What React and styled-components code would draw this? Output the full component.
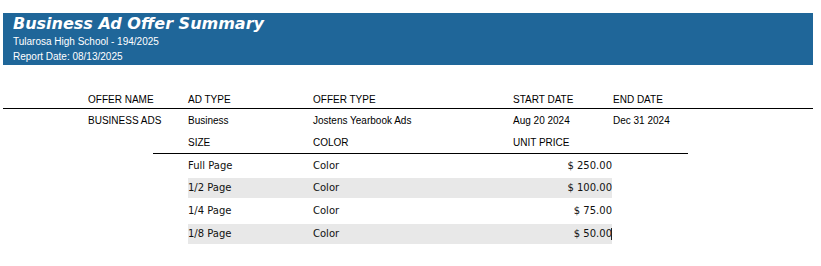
import React from "react";
import styled, { createGlobalStyle } from "styled-components";

const Global = createGlobalStyle`
  html, body { margin: 0; padding: 0; background: #fff; }
  body { font-family: "Liberation Sans", Arial, sans-serif; color: #000; }
`;

const Page = styled.div`
  padding: 13px 8px 0 3px;
  width: 810px;
`;

const Banner = styled.header`
  background: #1f6699;
  color: #fff;
  height: 52px;
  padding: 1px 0 0 10px;
  box-sizing: border-box;
  display: flex;
  flex-direction: column;
`;

const Title = styled.h1`
  margin: 0;
  font-family: "DejaVu Sans", sans-serif;
  font-weight: bold;
  font-style: italic;
  font-size: 16px;
  line-height: 20px;
`;

const SubLine = styled.div`
  font-family: "Liberation Sans", Arial, sans-serif;
  font-size: 10px;
  line-height: 15px;
`;

const Table = styled.section`
  margin-top: 24px;
`;

const Row = styled.div`
  display: grid;
  grid-template-columns: 100px 125px 200px 100px 1fr;
  padding-left: 85px;
  padding-top: ${(p) => p.$pad}px;
  box-sizing: border-box;
  height: ${(p) => p.$h}px;
  align-items: center;
  border-bottom: ${(p) => (p.$line ? "1px solid #000" : "none")};
  font-family: "Liberation Sans", Arial, sans-serif;
  font-size: 10px;
`;

const Cell = styled.div`
  white-space: nowrap;
`;

const Sub = styled.div`
  margin-left: 150px;
  width: 535px;
`;

const SubHead = styled.div`
  display: grid;
  grid-template-columns: 125px 200px 100px;
  padding: 0 0 0 35px;
  box-sizing: border-box;
  height: 23px;
  align-items: center;
  border-bottom: 1px solid #000;
  font-family: "Liberation Sans", Arial, sans-serif;
  font-size: 10px;
`;

const ItemRow = styled.div`
  display: grid;
  grid-template-columns: 125px 200px 99px;
  margin-left: 35px;
  width: 424px;
  box-sizing: border-box;
  height: ${(p) => p.$h}px;
  padding-top: ${(p) => p.$pad}px;
  align-items: start;
  line-height: 12px;
  background: ${(p) => (p.$shade ? "#e8e8e8" : "transparent")};
  font-family: "DejaVu Sans", sans-serif;
  font-size: 10px;
  color: #111;
`;

const Price = styled.div`
  text-align: right;
  position: relative;
  white-space: nowrap;
  ${(p) =>
    p.$caret
      ? `&::after { content: ""; position: absolute; right: 0; top: 0; width: 1px; height: 12px; background: #222; }`
      : ""}
`;

const items = [
  { size: "Full Page", color: "Color", price: "$ 250.00" },
  { size: "1/2 Page", color: "Color", price: "$ 100.00" },
  { size: "1/4 Page", color: "Color", price: "$ 75.00" },
  { size: "1/8 Page", color: "Color", price: "$ 50.00" },
];

const metrics = (i) => {
  if (i % 2 === 1) return { h: 20, pad: 4 };
  if (i === 0) return { h: 24, pad: 6 };
  return { h: 26, pad: 7 };
};

export default function App() {
  return (
    <Page>
      <Global />
      <Banner>
        <Title>Business Ad Offer Summary</Title>
        <SubLine>Tularosa High School - 194/2025</SubLine>
        <SubLine>Report Date: 08/13/2025</SubLine>
      </Banner>
      <Table>
        <Row $line $h={20} $pad={2}>
          <Cell>OFFER NAME</Cell>
          <Cell>AD TYPE</Cell>
          <Cell>OFFER TYPE</Cell>
          <Cell>START DATE</Cell>
          <Cell>END DATE</Cell>
        </Row>
        <Row $h={22} $pad={0}>
          <Cell>BUSINESS ADS</Cell>
          <Cell>Business</Cell>
          <Cell>Jostens Yearbook Ads</Cell>
          <Cell>Aug 20 2024</Cell>
          <Cell>Dec 31 2024</Cell>
        </Row>
        <Sub>
          <SubHead>
            <Cell>SIZE</Cell>
            <Cell>COLOR</Cell>
            <Cell>UNIT PRICE</Cell>
          </SubHead>
          {items.map((it, i) => {
            const m = metrics(i);
            return (
              <ItemRow key={i} $shade={i % 2 === 1} $h={m.h} $pad={m.pad}>
                <Cell>{it.size}</Cell>
                <Cell>{it.color}</Cell>
                <Price $caret={i === items.length - 1}>{it.price}</Price>
              </ItemRow>
            );
          })}
        </Sub>
      </Table>
    </Page>
  );
}
